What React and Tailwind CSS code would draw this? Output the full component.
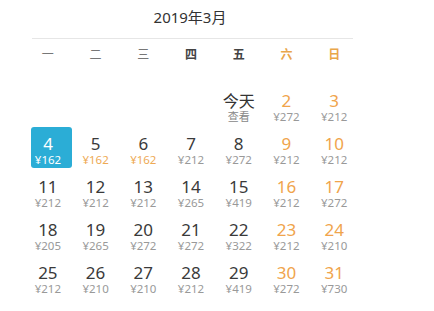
// Calendar month view with fares
const weekdays = [
  { label: '一', cls: 'text-[#777] font-normal' },
  { label: '二', cls: 'text-[#777] font-normal' },
  { label: '三', cls: 'text-[#777] font-normal' },
  { label: '四', cls: 'text-[#444] font-bold' },
  { label: '五', cls: 'text-[#444] font-bold' },
  { label: '六', cls: 'text-[#e9a64a] font-bold' },
  { label: '日', cls: 'text-[#e9a64a] font-bold' },
]

const prices = {
  2: 272, 3: 212, 4: 162, 5: 162, 6: 162, 7: 212, 8: 272, 9: 212, 10: 212,
  11: 212, 12: 212, 13: 212, 14: 265, 15: 419, 16: 212, 17: 272,
  18: 205, 19: 265, 20: 272, 21: 272, 22: 322, 23: 212, 24: 210,
  25: 212, 26: 210, 27: 210, 28: 212, 29: 419, 30: 272, 31: 730,
}

const cheap = [5, 6]

const Cell = ({ day, col }) => {
  if (day === null) return <div className="h-[43px]" />

  if (day === 1) {
    return (
      <div className="h-[43px] pt-[8px] flex flex-col items-center">
        <span className="text-[16px] leading-[18px] text-[#333]">今天</span>
        <span className="text-[11px] leading-[14px] text-[#888]">查看</span>
      </div>
    )
  }

  const weekend = col >= 5
  const price = prices[day]

  if (day === 4) {
    return (
      <div className="h-[43px]">
        <div className="w-[41px] h-[41px] ml-[7px] rounded-[3px] bg-[#2badd6] pt-[8px] pr-[7px] flex flex-col items-center text-white">
          <span className="text-[17px] leading-[18px]">{day}</span>
          <span className="text-[11.5px] leading-[14px]">¥{price}</span>
        </div>
      </div>
    )
  }

  return (
    <div className="h-[43px] pt-[8px] flex flex-col items-center">
      <span className={`text-[17px] leading-[18px] ${weekend ? 'text-[#f0a44c]' : 'text-[#3a3a3a]'}`}>{day}</span>
      <span className={`text-[11.5px] leading-[14px] ${cheap.includes(day) ? 'text-[#eeaa55]' : 'text-[#999]'}`}>¥{price}</span>
    </div>
  )
}

const App = () => {
  // March 2019 starts on Friday (col index 4)
  const days = [null, null, null, null]
  for (let d = 1; d <= 31; d++) days.push(d)

  return (
    <div
      className="w-[434px] h-[311px] bg-white overflow-hidden"
      style={{ fontFamily: '"Noto Sans", "Noto Sans CJK SC", sans-serif' }}
    >
      <div className="ml-[32px] w-[321px] h-[39px] border-b border-[#e6e6e6] flex items-center justify-center pr-[5px] pb-[4px] text-[15px] text-[#333]">
        2019年3月
      </div>

      <div className="ml-[24px] w-[334px] grid grid-cols-7 h-[31px] items-center">
        {weekdays.map((w) => (
          <div key={w.label} className={`text-center text-[12px] ${w.cls}`}>{w.label}</div>
        ))}
      </div>

      <div className="ml-[24px] w-[334px] mt-[14px] grid grid-cols-7">
        {days.map((d, i) => (
          <Cell key={i} day={d} col={i % 7} />
        ))}
      </div>
    </div>
  )
}

export default App
